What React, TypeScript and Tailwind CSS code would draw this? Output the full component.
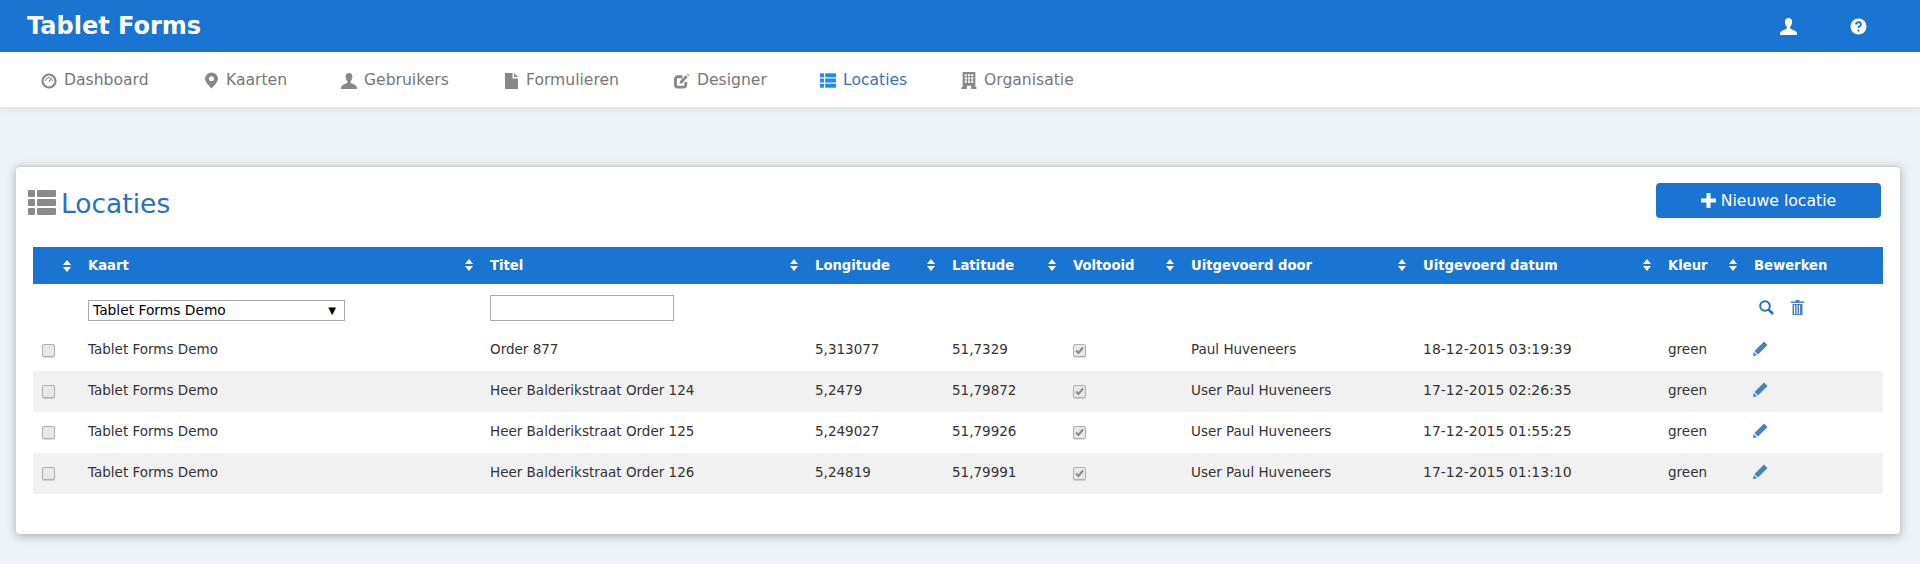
type Row = {
  title: string;
  lon: string;
  lat: string;
  user: string;
  date: string;
};

const rows: Row[] = [
  { title: "Order 877", lon: "5,313077", lat: "51,7329", user: "Paul Huveneers", date: "18-12-2015 03:19:39" },
  { title: "Heer Balderikstraat Order 124", lon: "5,2479", lat: "51,79872", user: "User Paul Huveneers", date: "17-12-2015 02:26:35" },
  { title: "Heer Balderikstraat Order 125", lon: "5,249027", lat: "51,79926", user: "User Paul Huveneers", date: "17-12-2015 01:55:25" },
  { title: "Heer Balderikstraat Order 126", lon: "5,24819", lat: "51,79991", user: "User Paul Huveneers", date: "17-12-2015 01:13:10" },
];

const columns = ["", "Kaart", "Titel", "Longitude", "Latitude", "Voltooid", "Uitgevoerd door", "Uitgevoerd datum", "Kleur"];

function ClockIcon() {
  return (
    <svg width="16" height="16" viewBox="0 0 16 16" fill="none" stroke="currentColor">
      <circle cx="8" cy="8" r="6.500" strokeWidth="2.200" />
      <path d="M4.500 8A3.500 3.500 0 0 1 11.500 8" strokeWidth="1" />
      <path d="M8 9L10 5.500" strokeWidth="1.200" />
    </svg>
  );
}

function PinIcon() {
  return (
    <svg width="13" height="17" viewBox="0 0 14 17" fill="currentColor">
      <path fillRule="evenodd" d="M7 0a7 7 0 0 1 7 6.500c0 3-3.500 7-7 10.500C3.500 13.500 0 9.500 0 6.500A7 7 0 0 1 7 0zm0 3.800a2.700 2.700 0 1 0 0 5.400 2.700 2.700 0 0 0 0-5.400z" />
    </svg>
  );
}

function UserIcon({ size = 16 }: { size?: number }) {
  return (
    <svg width={size} height={size} viewBox="0 0 16 16" fill="currentColor">
      <path d="M8 0c2.200 0 3.400 1.600 3.400 3.800 0 1.900-.8 3.400-1.700 4.400-.4.500-.3 1.500.3 1.800 1.700.9 4.500 1.700 5.500 3.200.4.700.5 1.500.5 2.800H0c0-1.300.1-2.100.5-2.800 1-1.500 3.800-2.300 5.500-3.200.6-.3.700-1.300.3-1.800C5.400 7.200 4.600 5.700 4.600 3.800 4.600 1.600 5.800 0 8 0z" />
    </svg>
  );
}

function FileIcon() {
  return (
    <svg width="13" height="16" viewBox="0 0 13 16" fill="currentColor">
      <path d="M0 0h7.500v5.500H13V16H0zM9 0l4 4H9z" />
    </svg>
  );
}

function EditIcon() {
  return (
    <svg width="17" height="16" viewBox="0 0 17 16" fill="none" stroke="currentColor">
      <path d="M12.500 9V12A2.500 2.500 0 0 1 10 14.500H4A2.500 2.500 0 0 1 1.500 12V6A2.500 2.500 0 0 1 4 3.500H9" strokeWidth="3" />
      <path d="M6 11L6.500 8L12.500 2L14.500 4L8.500 10.500z" fill="currentColor" stroke="none" />
      <path d="M13.500 1L15 0.500L16 2L15.500 3z" fill="currentColor" stroke="none" />
    </svg>
  );
}

function ListIcon({ w, h }: { w: number; h: number }) {
  return (
    <svg width={w} height={h} viewBox="0 0 28 25" fill="currentColor">
      <rect x="0" y="0" width="7" height="7" rx="1" />
      <rect x="9" y="0" width="19" height="7" rx="1" />
      <rect x="0" y="9" width="7" height="7" rx="1" />
      <rect x="9" y="9" width="19" height="7" rx="1" />
      <rect x="0" y="18" width="7" height="7" rx="1" />
      <rect x="9" y="18" width="19" height="7" rx="1" />
    </svg>
  );
}

function BuildingIcon() {
  return (
    <svg width="16" height="17" viewBox="0 0 14 16" fill="currentColor">
      <path
        fillRule="evenodd"
        d="M1 0h12v14h1v2H9v-3H5v3H0v-2h1zM3 2v2h2V2zm3 0v2h2V2zm3 0v2h2V2zM3 5v2h2V5zm3 0v2h2V5zm3 0v2h2V5zM3 8v2h2V8zm3 0v2h2V8zm3 0v2h2V8z"
      />
    </svg>
  );
}

function HelpIcon() {
  return (
    <svg width="17" height="17" viewBox="0 0 17 17">
      <circle cx="8.500" cy="8.500" r="8" fill="currentColor" />
      <path d="M6 6.500c0-3 5-3 5 0 0 1.800-2.500 1.800-2.500 3.500" fill="none" stroke="#1a75d2" strokeWidth="1.800" />
      <rect x="7.500" y="11.500" width="2" height="2" fill="#1a75d2" />
    </svg>
  );
}

function SortIcon() {
  return (
    <svg width="8" height="12" viewBox="0 0 8 12" fill="currentColor" className="shrink-0">
      <path d="M4 0l4 5H0zM0 7h8l-4 5z" />
    </svg>
  );
}

function PencilIcon() {
  return (
    <svg width="15" height="15" viewBox="0 0 15 15" fill="currentColor">
      <path d="M11 0.500L14.500 4L5 13.500L1.500 10zM0.800 11L4 14.200L0 15z" />
    </svg>
  );
}

function SearchIcon() {
  return (
    <svg width="15" height="15" viewBox="0 0 15 15" fill="none" stroke="currentColor" strokeWidth="2">
      <circle cx="6" cy="6" r="4.800" />
      <path d="M9.500 9.500L14 14" strokeWidth="2.500" />
    </svg>
  );
}

function TrashIcon() {
  return (
    <svg width="13" height="15" viewBox="0 0 13 15" fill="currentColor">
      <path d="M4.500 0h4v1.500H13V3H0V1.500h4.500zM1.500 4h10v11h-10zm1.500 1V14h1V5zm2.500 0V14h1V5zm2.500 0V14h1V5z" fillRule="evenodd" />
    </svg>
  );
}

function Check({ checked }: { checked?: boolean }) {
  return (
    <span className="mt-[3px] flex h-[13px] w-[13px] items-center justify-center rounded-[2px] border border-[#b0b0b0] bg-[#e8e8e8] shadow-[0_1px_1px_rgba(0,0,0,0.15)]">
      {checked && (
        <svg width="9" height="9" viewBox="0 0 9 9" fill="none" stroke="#8a8a8a" strokeWidth="2">
          <path d="M1 4.500L3.500 7L8 1.500" />
        </svg>
      )}
    </span>
  );
}

const navItems = [
  { label: "Dashboard", icon: <ClockIcon />, w: "w-[162px]" },
  { label: "Kaarten", icon: <PinIcon />, w: "w-[138px]" },
  { label: "Gebruikers", icon: <UserIcon />, w: "w-[162px]" },
  { label: "Formulieren", icon: <FileIcon />, w: "w-[171px]" },
  { label: "Designer", icon: <EditIcon />, w: "w-[146px]" },
  { label: "Locaties", icon: <ListIcon w={17} h={15} />, w: "w-[141px]", active: true },
  { label: "Organisatie", icon: <BuildingIcon />, w: "w-[140px]" },
];

export default function App() {
  return (
    <div className="h-[564px] overflow-hidden bg-[#ecf3f6] font-['DejaVu_Sans',sans-serif] text-[13.5px] text-[#333]">
      {/* Top bar */}
      <header className="flex h-[52px] items-center justify-between bg-[#1a75d2] pl-[27px] pr-[53px] text-white">
        <span className="text-[24px] font-bold">Tablet Forms</span>
        <div className="flex items-center gap-[53px]">
          <UserIcon size={17} />
          <HelpIcon />
        </div>
      </header>

      {/* Nav */}
      <nav className="flex h-[55px] items-center bg-white pl-[41px] pt-[3px] shadow-[0_2px_6px_rgba(0,0,0,0.08)]">
        {navItems.map((item) => (
          <a
            key={item.label}
            className={`flex items-center gap-[7px] text-[15.6px] ${item.w} ${item.active ? "text-[#3a72b8]" : "text-[#777]"}`}
          >
            <span className={`flex w-[16px] justify-center ${item.active ? "text-[#1a8cff]" : "text-[#888]"}`}>{item.icon}</span>
            {item.label}
          </a>
        ))}
      </nav>

      {/* Card */}
      <main className="ml-[16px] mr-[20px] mt-[59px] h-[368px] rounded-[4px] border-t border-[#ccc] bg-white pl-[17px] pr-[17px] pt-[16px] shadow-[0_2px_10px_rgba(0,0,0,0.3)]">
        <div className="flex h-[64px] items-start justify-between">
          <h1 className="flex items-center gap-[5px] pt-[1px] text-[26.5px] leading-[36px] text-[#2a6fc0]">
            <span className="-ml-[5px] text-[#8a8a8a]">
              <ListIcon w={28} h={25} />
            </span>
            <span className="translate-y-[2px]">Locaties</span>
          </h1>
          <button className="mr-[2px] flex h-[35px] w-[225px] items-center justify-center gap-[5px] rounded-[4px] bg-[#1a75d2] text-[15.7px] text-white">
            <svg width="15" height="15" viewBox="0 0 15 15" fill="currentColor">
              <path d="M5.500 0h4v5.500H15v4H9.500V15h-4V9.500H0v-4h5.500z" />
            </svg>
            Nieuwe locatie
          </button>
        </div>

        <table className="w-[1850px] table-fixed border-collapse">
          <colgroup>
            <col className="w-[45px]" />
            <col className="w-[402px]" />
            <col className="w-[325px]" />
            <col className="w-[137px]" />
            <col className="w-[121px]" />
            <col className="w-[118px]" />
            <col className="w-[232px]" />
            <col className="w-[245px]" />
            <col className="w-[86px]" />
            <col className="w-[139px]" />
          </colgroup>
          <thead>
            <tr className="h-[37px] bg-[#1a75d2] text-[13.2px] text-white">
              {columns.map((col, i) => (
                <th key={i} className="pl-[10px] pr-[7px] text-left font-bold">
                  <div className="flex items-center justify-between">
                    <span className="whitespace-nowrap">{col}</span>
                    <SortIcon />
                  </div>
                </th>
              ))}
              <th className="pl-[10px] text-left font-bold">Bewerken</th>
            </tr>
          </thead>
          <tbody>
            <tr className="h-[46px]">
              <td />
              <td className="pl-[10px] pt-[2px]">
                <div className="mt-[5px] flex h-[21px] w-[257px] items-center justify-between border border-[#a9a9a9] pl-[4px] pr-[8px] text-[13.8px] text-black">
                  <span>Tablet Forms Demo</span>
                  <span className="text-[10px]">▼</span>
                </div>
              </td>
              <td className="pl-[10px] pt-[2px]">
                <input className="block h-[26px] w-[184px] border border-[#a9a9a9] bg-white" />
              </td>
              <td colSpan={6} />
              <td className="pl-[15px]">
                <div className="flex items-center gap-[17px] text-[#2a6fc0]">
                  <SearchIcon />
                  <span className="text-[#4a7fc0]">
                    <TrashIcon />
                  </span>
                </div>
              </td>
            </tr>
            {rows.map((row, i) => (
              <tr key={row.title} className={`h-[41px] [&>td]:pb-[3px] ${i % 2 === 1 ? "bg-[#f1f1f1]" : ""}`}>
                <td className="pl-[9px]">
                  <Check />
                </td>
                <td className="pl-[10px]">Tablet Forms Demo</td>
                <td className="pl-[10px]">{row.title}</td>
                <td className="pl-[10px]">{row.lon}</td>
                <td className="pl-[10px]">{row.lat}</td>
                <td className="pl-[10px]">
                  <Check checked />
                </td>
                <td className="pl-[10px]">{row.user}</td>
                <td className="pl-[10px] text-[14px]">{row.date}</td>
                <td className="pl-[10px]">green</td>
                <td className="pl-[9px] text-[#4a7fc0]">
                  <div className="-translate-y-px">
                    <PencilIcon />
                  </div>
                </td>
              </tr>
            ))}
          </tbody>
        </table>
      </main>
    </div>
  );
}
